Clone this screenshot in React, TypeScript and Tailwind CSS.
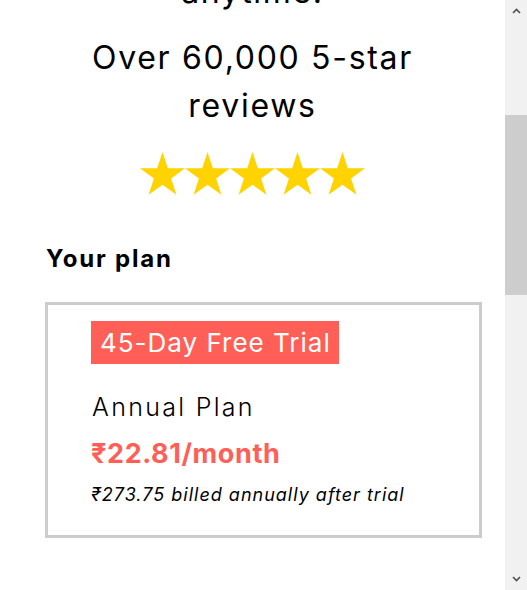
import React from "react";

const FONT = "font-['Inter','Noto_Sans',sans-serif]";

function Star() {
  return (
    <svg width="45" height="43" viewBox="0 0 45 43" className="block">
      <polygon
        fill="#FFD300"
        points="22.5,0 27.81,16.35 45,16.35 31.1,26.45 36.41,42.8 22.5,32.7 8.59,42.8 13.9,26.45 0,16.35 17.19,16.35"
      />
    </svg>
  );
}

function Scrollbar() {
  return (
    <div className="flex h-full w-[22px] shrink-0 flex-col bg-[#f1f1f1]">
      <div className="flex h-[22px] items-center justify-center">
        <svg width="9" height="6" viewBox="0 0 9 6">
          <path d="M1 5 L4.5 1.5 L8 5" stroke="#505050" strokeWidth="1.6" fill="none" />
        </svg>
      </div>
      <div className="mt-[93px] h-[180px] bg-[#cdcdcd]" />
      <div className="flex-1" />
      <div className="flex h-[22px] items-center justify-center">
        <svg width="9" height="6" viewBox="0 0 9 6">
          <path d="M1 1 L4.5 4.5 L8 1" stroke="#505050" strokeWidth="1.6" fill="none" />
        </svg>
      </div>
    </div>
  );
}

export default function App() {
  return (
    <div className={`flex h-[590px] w-full overflow-hidden bg-white text-black ${FONT}`}>
      <div className="min-w-0 flex-1 overflow-hidden">
        <div className="mt-[-32px]">
          <p className="text-center text-[32px] leading-[48px] tracking-[1.7px]">anytime.</p>
          <h2 className="mt-[18px] text-center text-[32px] leading-[48px] tracking-[1.7px]">
            Over 60,000 5-star
            <br />
            reviews
          </h2>
          <div className="mt-[22px] flex justify-center">
            <Star />
            <Star />
            <Star />
            <Star />
            <Star />
          </div>

          <div className="pl-[45px] pr-[23px]">
            <h3 className="mt-[48px] pl-px text-[24px] font-bold leading-[32px] tracking-[1.8px]">Your plan</h3>

            <div className="mt-[27px] border-[3px] border-[#cccccc] pl-[43px] pr-4 pt-4 pb-[28px]">
              <span className="inline-block h-[43px] bg-[#ff5f57] pl-[9px] pr-[8px] text-[26px] leading-[43px] tracking-[1px] text-white">
                45-Day Free Trial
              </span>
              <p className="mt-[27px] pl-px text-[25px] font-light leading-[32px] tracking-[2.3px]">Annual Plan</p>
              <p className="mt-[13px] text-[27px] font-bold leading-[36px] tracking-[0.6px] text-[#ff5f57]">₹22.81/month</p>
              <p className="mt-[11px] text-[18px] italic leading-[24px] tracking-[1px]">₹273.75 billed annually after trial</p>
            </div>
          </div>
        </div>
      </div>
      <Scrollbar />
    </div>
  );
}
